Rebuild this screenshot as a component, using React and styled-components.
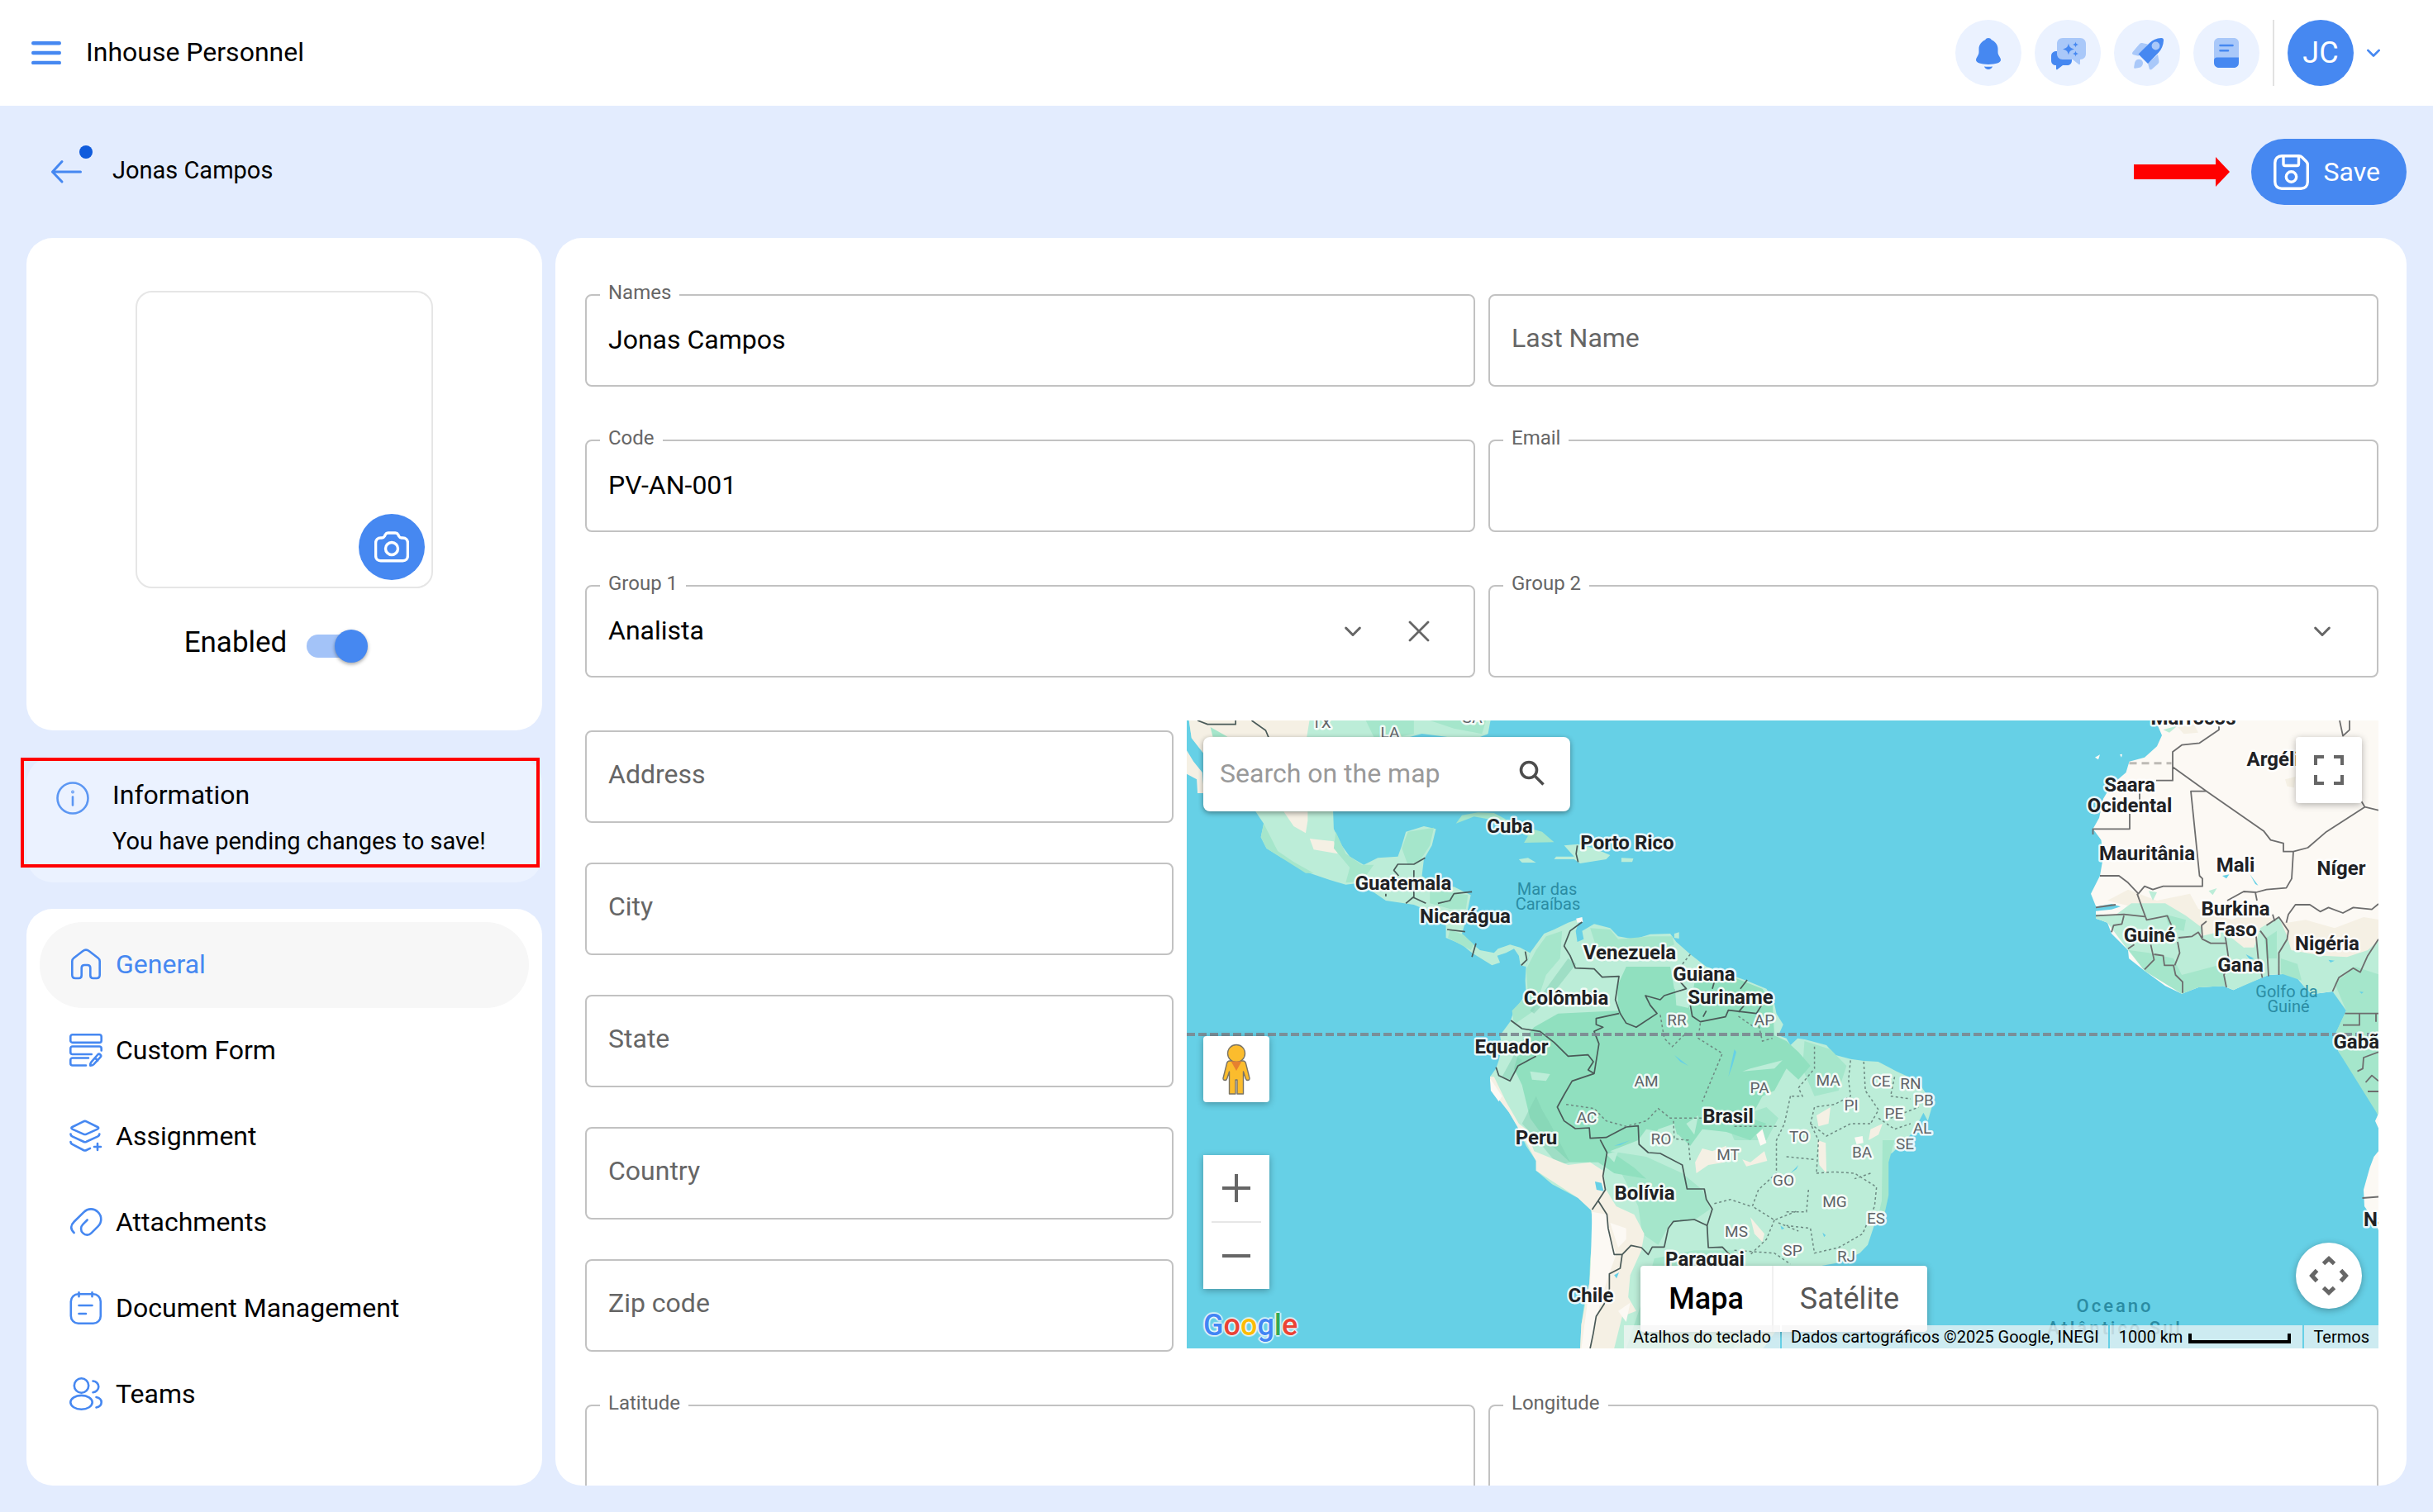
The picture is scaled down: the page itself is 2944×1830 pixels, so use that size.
import React from "react";
import styled, { createGlobalStyle, css } from "styled-components";

const color = {
  primary: "#4688f1",
  primaryDark: "#0f5bdc",
  tint: "#a9c8f9",
  pale: "#ebf2ff",
  page: "#e3ecfe",
  text: "#000",
  muted: "#666",
  outline: "#c2c2c2",
  alert: "#ff0000",
};

const GlobalStyle = createGlobalStyle`
  *, *::before, *::after { box-sizing: border-box; }
  body {
    margin: 0;
    background: ${color.page};
    color: ${color.text};
    font-family: Roboto, "Liberation Sans", sans-serif;
    font-size: 32px;
  }
  button, input, select { font: inherit; color: inherit; }
  button { border: 0; padding: 0; background: none; cursor: pointer; }
  svg { display: block; flex: none; }
`;

const Page = styled.div`
  display: flex;
  flex-direction: column;
  height: 100vh;
  overflow: hidden;
`;

/* ---------- top bar ---------- */

const TopBar = styled.header`
  display: flex;
  align-items: center;
  justify-content: space-between;
  flex: none;
  padding: 24px 64px 24px 38px;
  background: #fff;
`;

const BarGroup = styled.div`
  display: flex;
  align-items: center;
  gap: ${(p) => p.$gap}px;
`;

const BarTitle = styled.h1`
  margin: 0;
  padding-bottom: 2px;
  font-size: 32px;
  line-height: 40px;
  font-weight: 400;
`;

const RoundButton = styled.button`
  display: grid;
  place-items: center;
  width: 80px;
  height: 80px;
  border-radius: 50%;
  font-size: 36px;
  color: #fff;
  background: ${(p) => (p.$solid ? color.primary : color.pale)};
`;

const Divider = styled.span`
  width: 2px;
  height: 80px;
  background: #e2e2e2;
`;

/* ---------- page heading ---------- */

const Heading = styled.div`
  display: flex;
  align-items: center;
  justify-content: space-between;
  flex: none;
  padding: 40px 32px 40px 56px;
`;

const BackButton = styled.button`
  position: relative;
  display: grid;
  place-items: center;
  width: 48px;
  height: 48px;

  &::after {
    content: "";
    position: absolute;
    left: 40px;
    top: -8px;
    width: 16px;
    height: 16px;
    border-radius: 50%;
    background: ${color.primaryDark};
  }
`;

const PersonName = styled.h2`
  margin: 0;
  padding-bottom: 4px;
  font-size: 29px;
  line-height: 36px;
  font-weight: 400;
`;

const SaveButton = styled.button`
  display: flex;
  align-items: center;
  gap: 18px;
  height: 80px;
  padding: 0 32px 0 27px;
  border-radius: 40px;
  background: ${color.primary};
  color: #fff;
  font-size: 32px;
`;

/* ---------- layout ---------- */

const Columns = styled.main`
  display: grid;
  grid-template-columns: 624px minmax(0, 1fr);
  grid-template-rows: minmax(0, 1fr);
  gap: 16px;
  flex: 1;
  min-height: 0;
  padding: 0 32px 32px;
`;

const Side = styled.aside`
  display: flex;
  flex-direction: column;
  gap: 32px;
`;

const Card = styled.section`
  border-radius: 32px;
  background: #fff;
`;

const ProfileCard = styled(Card)`
  display: flex;
  flex-direction: column;
  align-items: center;
  gap: 42px;
  padding: 64px 32px 82px;
`;

const Photo = styled.div`
  display: flex;
  align-items: flex-end;
  justify-content: flex-end;
  width: 360px;
  height: 360px;
  padding: 8px;
  border: 2px solid #e6e6e6;
  border-radius: 20px;
`;

const SwitchRow = styled.label`
  display: flex;
  align-items: center;
  gap: 24px;
  padding-right: 20px;
  font-size: 35px;
  line-height: 48px;
`;

const Switch = styled.input`
  appearance: none;
  position: relative;
  width: 74px;
  height: 40px;
  margin: 8px 0 0;

  &::before {
    content: "";
    position: absolute;
    inset: 6px 2px 6px 0;
    border-radius: 14px;
    background: #a3c3f8;
  }

  &::after {
    content: "";
    position: absolute;
    top: 0;
    right: 0;
    width: 40px;
    height: 40px;
    border-radius: 50%;
    background: ${color.primary};
    box-shadow: 0 2px 4px rgba(0, 0, 0, 0.35);
  }
`;

const InfoCard = styled(Card)`
  position: relative;
  display: flex;
  align-items: flex-start;
  gap: 28px;
  padding: 30px 36px 34px;
  background: ${color.pale};

  &::after {
    content: "";
    position: absolute;
    inset: 1px 3px 18px -7px;
    border: 4px solid ${color.alert};
  }
`;

const InfoText = styled.div`
  display: flex;
  flex-direction: column;
  gap: 24px;
`;

const InfoTitle = styled.strong`
  font-size: 32px;
  line-height: 32px;
  font-weight: 400;
`;

const InfoMessage = styled.span`
  font-size: 29px;
  line-height: 32px;
`;

const MenuCard = styled(Card)`
  flex: 1;
  padding: 16px;
`;

const MenuLink = styled.a`
  display: flex;
  align-items: center;
  gap: 16px;
  height: 104px;
  padding: 0 36px 2px;
  border-radius: 52px;
  text-decoration: none;
  color: ${(p) => (p.$active ? color.primary : color.text)};
  background: ${(p) => (p.$active ? "#f7f7f7" : "transparent")};
`;

const FormCard = styled(Card)`
  overflow: hidden;
  padding: 68px 34px 0 36px;
`;

const Form = styled.form`
  display: flex;
  flex-direction: column;
`;

const FieldGrid = styled.div`
  display: grid;
  grid-template-columns: 1fr 1fr;
  gap: 64px 16px;
`;

const AddressRow = styled.div`
  display: grid;
  grid-template-columns: minmax(0, 712fr) minmax(0, 1442fr);
  gap: 16px;
  padding: 52px 0 64px;
`;

const AddressFields = styled.div`
  display: flex;
  flex-direction: column;
  gap: 48px;
  padding-top: 12px;
`;

/* ---------- outlined field ---------- */

const FieldBox = styled.div`
  position: relative;
  display: flex;
  align-items: center;
  height: 112px;
  padding-right: ${(p) => (p.$adorned ? 26 : 0)}px;
  border: 2px solid ${color.outline};
  border-radius: 8px;
`;

const floating = css`
  left: 16px;
  top: -18px;
  padding: 0 10px;
  background: #fff;
  font-size: 24px;
  line-height: 28px;
`;

const resting = css`
  left: 26px;
  top: 0;
  font-size: 32px;
  line-height: 102px;
`;

const FieldLabel = styled.label`
  position: absolute;
  color: ${color.muted};
  pointer-events: none;
  ${(p) => (p.$floating ? floating : resting)}
`;

const control = css`
  flex: 1;
  min-width: 0;
  height: 100%;
  padding: 0 26px 2px;
  border: 0;
  border-radius: 8px;
  outline: 0;
  background: transparent;
  font-size: 32px;
`;

const TextInput = styled.input`
  ${control}
`;

const Select = styled.select`
  ${control}
  appearance: none;
`;

const Adornment = styled.span`
  display: grid;
  place-items: center;
  width: 80px;
  height: 80px;
`;

/* ---------- map ---------- */

const MapFrame = styled.div`
  position: relative;
  height: 760px;
  overflow: hidden;
  background: #66d0e6;
`;

const MapSvg = styled.svg`
  width: 100%;
  height: 100%;
`;

const MapSearch = styled.label`
  position: absolute;
  left: 20px;
  top: 20px;
  display: flex;
  align-items: center;
  width: 444px;
  height: 90px;
  padding: 0 30px 2px 20px;
  border-radius: 8px;
  background: #fff;
  box-shadow: 0 2px 6px rgba(0, 0, 0, 0.4);
`;

const SearchInput = styled.input`
  flex: 1;
  min-width: 0;
  padding: 0;
  border: 0;
  outline: 0;
  background: transparent;
  font-size: 32px;

  &::placeholder { color: #999; opacity: 1; }
`;

const MapControl = styled.button`
  position: absolute;
  display: grid;
  place-items: center;
  width: 80px;
  height: 80px;
  border-radius: ${(p) => (p.$round ? "50%" : "4px")};
  background: #fff;
  box-shadow: 0 2px 8px rgba(0, 0, 0, 0.3);
`;

const FullscreenControl = styled(MapControl)`
  right: 20px;
  top: 20px;
`;

const PegmanControl = styled(MapControl)`
  left: 20px;
  bottom: 298px;
`;

const CameraControl = styled(MapControl)`
  right: 20px;
  bottom: 48px;
`;

const ZoomControls = styled.div`
  position: absolute;
  left: 20px;
  bottom: 72px;
  display: flex;
  flex-direction: column;
  align-items: center;
  width: 80px;
  background: #fff;
  box-shadow: 0 2px 8px rgba(0, 0, 0, 0.3);
`;

const ZoomButton = styled.button`
  display: grid;
  place-items: center;
  width: 80px;
  height: 80px;
`;

const ZoomRule = styled.span`
  width: 60px;
  height: 2px;
  background: #e6e6e6;
`;

const MapTypes = styled.div`
  position: absolute;
  right: 546px;
  bottom: 20px;
  display: flex;
  border-radius: 4px;
  background: #fff;
  box-shadow: 0 2px 8px rgba(0, 0, 0, 0.3);
`;

const MapType = styled.button`
  height: 80px;
  padding: 0 34px;
  box-shadow: ${(p) => (p.$active ? "none" : "inset 2px 0 0 #f0f0f0")};
  font-size: 36px;
  font-weight: ${(p) => (p.$active ? 500 : 400)};
  color: ${(p) => (p.$active ? "#000" : "#565656")};
`;

const Brand = styled.a`
  position: absolute;
  left: 20px;
  bottom: 6px;
  font-size: 36px;
  line-height: 44px;
  font-weight: 500;
  text-decoration: none;
  text-shadow: 0 0 2px #fff, 0 0 2px #fff, 2px 0 1px rgba(255, 255, 255, 0.6),
    -2px 0 1px rgba(255, 255, 255, 0.6), 0 2px 1px rgba(255, 255, 255, 0.6),
    0 -2px 1px rgba(255, 255, 255, 0.6);
`;

const BrandLetter = styled.span`
  color: ${(p) => p.$ink};
`;

const Legal = styled.div`
  position: absolute;
  right: 0;
  bottom: 0;
  display: flex;
  gap: 2px;
  font-size: 20px;
  line-height: 28px;
`;

const legalPart = css`
  display: flex;
  align-items: center;
  height: 28px;
  padding: 0 11px;
  background: rgba(245, 245, 245, 0.72);
  color: #000;
  font-size: 20px;
  text-decoration: none;
`;

const LegalButton = styled.button`
  ${legalPart}
`;

const LegalText = styled.span`
  ${legalPart}
`;

const LegalLink = styled.a`
  ${legalPart}
`;

const ScaleBar = styled.span`
  width: 124px;
  height: 12px;
  margin: 4px 3px 0 7px;
  border: 4px solid #000;
  border-top: 0;
`;

/* ---------- icons ---------- */

const line = {
  fill: "none",
  stroke: "currentColor",
  strokeLinecap: "round",
  strokeLinejoin: "round",
};

const MenuIcon = () => (
  <svg width="36" height="28" viewBox="0 0 36 28" {...line} stroke={color.primary} strokeWidth="4.4">
    <path d="M2.2 2.2h31.6M2.2 14h31.6M2.2 26h31.6" />
  </svg>
);

const BellIcon = () => (
  <svg width="80" height="80" viewBox="0 0 80 80" fill={color.primary}>
    <path d="M40 22c1.600 0 3 .8 3.800 2.200C48 26 51.500 30 51.500 35v4c0 2 .8 3.600 1.800 5.200 1 1.600 1.700 3 1.700 4.400 0 3.400-6 5.400-15 5.400s-15-2-15-5.400c0-1.400.7-2.800 1.700-4.400s1.800-3.200 1.800-5.200v-4c0-5 3.500-9 7.700-10.800C37 22.800 38.400 22 40 22z" />
    <path d="M35 56.500c1.600.3 8.400.3 10 0-.8 2.200-2.600 3.500-5 3.500s-4.200-1.300-5-3.500z" />
  </svg>
);

const ChatIcon = () => (
  <svg width="80" height="80" viewBox="0 0 80 80">
    <path fill={color.primary} d="M26 38h13c4 0 6 2.500 6 6v5c0 4-2.500 6-6 6h-5l-6.500 5c-1 .7-1.500.3-1.500-.7V55c-3.500 0-6-2-6-6v-5c0-3.500 2.500-6 6-6z" />
    <path fill={color.tint} d="M34 22h21c4.500 0 7 3 7 7v12c0 4-2.500 7-7 7v5c0 1.200-1 1.500-1.800.8L46 48H34c-4.500 0-7-3-7-7V29c0-4 2.500-7 7-7z" />
    <path fill={color.primary} d="M41 28.500c1 4.500 2.500 6 7 7-4.500 1-6 2.500-7 7-1-4.500-2.500-6-7-7 4.500-1 6-2.500 7-7zM49.500 26.500c.5 2.300 1.200 3 3.500 3.500-2.300.5-3 1.200-3.500 3.500-.5-2.300-1.200-3-3.500-3.500 2.300-.5 3-1.200 3.500-3.500zM49.500 37.500c.5 2.300 1.200 3 3.500 3.500-2.300.5-3 1.200-3.500 3.500-.5-2.300-1.200-3-3.500-3.500 2.300-.5 3-1.200 3.500-3.500z" />
  </svg>
);

const RocketIcon = () => (
  <svg width="80" height="80" viewBox="0 0 80 80">
    <path fill={color.tint} d="M41 29.500l-6-1.300c-2-.4-3.500.1-4.600 1.600l-7.600 9c-1.500 2-.7 3 .8 3.500l6 1.400z" />
    <path fill={color.tint} d="M53 42l1.300 7c.4 2-.1 3.500-1.600 4.800l-6.500 5.600c-2 1.600-3.200.8-3.600-.7L41 52.500z" />
    <path fill={color.tint} d="M24.200 57l.8-5c.7-3 3-4.500 5.500-4.300 3 .3 4.800 2.500 4.500 5-.3 3-2 4.800-5 5.300l-4.500.8c-1 .1-1.500-.6-1.300-1.800z" />
    <path fill={color.primary} d="M57 22c2-.2 3.200 1 3 3-.3 6-2.500 10.500-6 14.500L41 53 29.500 41.500 43 28c4-3.600 8.400-5.700 14-6z" />
    <circle cx="50.500" cy="31.500" r="4.900" fill={color.tint} />
  </svg>
);

const NotesIcon = () => (
  <svg width="80" height="80" viewBox="0 0 80 80">
    <path fill={color.tint} d="M31 22h18c3.500 0 6 2.500 6 6v24H25V28c0-3.500 2.500-6 6-6z" />
    <path fill={color.primary} d="M28.500 45.500H55V52c0 3.500-2.500 6-6 6H31c-3.500 0-6-2.500-6-6v-3c0-2 1.500-3.500 3.500-3.500z" />
    <path stroke={color.primary} strokeWidth="2.600" strokeLinecap="round" d="M32.500 31h15M32.500 37.200h9.500" />
  </svg>
);

const ChevronIcon = ({ size = 18, ink = "#666", weight = 2.6 }) => (
  <svg width={size} height={size} viewBox="0 0 18 18" {...line} stroke={ink} strokeWidth={weight}>
    <path d="M1.500 5.500L9 13l7.500-7.500" />
  </svg>
);

const CloseIcon = () => (
  <svg width="26" height="26" viewBox="0 0 26 26" {...line} stroke="#666" strokeWidth="2.800">
    <path d="M2 2l22 22M24 2L2 24" />
  </svg>
);

const ArrowLeftIcon = () => (
  <svg width="48" height="48" viewBox="0 0 48 48" {...line} stroke={color.primary} strokeWidth="3">
    <path d="M41.500 24H7.500M19 11.500L7.500 24 19 36" />
  </svg>
);

const RedArrow = () => (
  <svg width="116" height="36" viewBox="0 0 116 36" fill={color.alert}>
    <path d="M0 9h99V0l17 18-17 18v-9H0z" />
  </svg>
);

const SaveIcon = () => (
  <svg width="43" height="43" viewBox="0 0 43 43" {...line} strokeWidth="3.400">
    <path d="M10 1.800h20.500c1.800 0 3 .5 4.200 1.700l5 5c1.100 1.100 1.600 2.400 1.600 4V33c0 5-3.300 8.200-8.200 8.200H10c-5 0-8.200-3.200-8.200-8.200V10c0-5 3.300-8.200 8.200-8.200z" />
    <path d="M12 2v9.500c0 1.200.8 2 2 2h14.500c1.200 0 2-.8 2-2V2" />
    <circle cx="21.500" cy="27" r="6.200" />
  </svg>
);

const CameraIcon = () => (
  <svg width="42" height="38" viewBox="0 0 42 38" {...line} strokeWidth="3.400">
    <path d="M16.500 2h9c1.500 0 2.500.7 3.200 2l1 2c.7 1.300 1.700 2 3.200 2h1.500c3.600 0 6 2.400 6 6v15.500c0 4-2.400 6.300-6 6.300H7.600c-3.600 0-6-2.300-6-6.300V14c0-3.600 2.400-6 6-6h1.500c1.500 0 2.500-.7 3.200-2l1-2c.7-1.300 1.700-2 3.200-2z" />
    <circle cx="21" cy="21" r="7.500" />
  </svg>
);

const InfoIcon = () => (
  <svg width="40" height="40" viewBox="0 0 40 40" {...line} stroke="#5c97f3" strokeWidth="2.600">
    <circle cx="20" cy="20" r="18.500" />
    <path d="M20 18.500v10" />
    <circle cx="20" cy="12.500" r=".6" />
  </svg>
);

const SideIcon = ({ children }) => (
  <svg width="40" height="40" viewBox="0 0 40 40" {...line} stroke={color.primary} strokeWidth="2.600">
    {children}
  </svg>
);

const HomeIcon = () => (
  <SideIcon>
    <path d="M3.300 16.500c0-1.700.7-3 2-4L16 4.200c2.600-2 5.400-2 8 0l10.700 8.300c1.300 1 2 2.300 2 4V33c0 2.500-1.400 4-3.900 4h-4c-2.200 0-3.500-1.300-3.500-3.500v-9c0-2.200-1.300-3.500-3.500-3.500h-3.600c-2.200 0-3.500 1.300-3.500 3.500v9c0 2.200-1.300 3.500-3.500 3.500h-4c-2.500 0-3.900-1.500-3.900-4z" />
  </SideIcon>
);

const FormIcon = () => (
  <SideIcon>
    <rect x="1.300" y="1.300" width="37.400" height="9.600" rx="2.500" />
    <path d="M38.700 20.500V18c0-1.600-1-2.500-2.500-2.500H3.800c-1.500 0-2.500.9-2.500 2.500v4.500c0 1.600 1 2.500 2.500 2.500h23M23 29.500H3.800c-1.500 0-2.500.9-2.500 2.500v4c0 1.600 1 2.500 2.500 2.500H20" />
    <path d="M34.200 25.500c1-1 2.300-.9 3.200 0 1 1 1 2.200 0 3.200l-8.200 8.600c-1 1-2 1.300-3.900 1.300-.1-2 .2-3.200 1.200-4.300zM31 29.500l3.200 3" />
  </SideIcon>
);

const LayersIcon = () => (
  <SideIcon>
    <path d="M17 2.300c1.300-.6 2.400-.6 3.600 0L34 9c1.600.8 1.600 1.800 0 2.600L20.600 17.600c-1.200.6-2.300.6-3.600 0L3.500 11.600C2 10.800 2 9.800 3.500 9z" />
    <path d="M1.500 17.500c0 1.500.8 2.400 2.300 3.100L17 26.800c1.300.6 2.400.6 3.600 0L34 20.600c1.500-.7 2.300-1.600 2.300-3.100" />
    <path d="M1.500 27c0 1.500.8 2.400 2.300 3.100L17 37c1.300.6 2.400.6 3.600 0l4.400-2.200M34 29v8M30 33h8" />
  </SideIcon>
);

const ClipIcon = () => (
  <SideIcon>
    <path d="M21.600 17.500l-5.300 5.400c-3 3-3 7.600 0 10.500 3 3 7.300 3 10.200 0l8-8c5-5 5-12.500.2-17.300-5-5-12.300-5-17.300 0L5.800 19.500c-4.500 4.500-5 9-.2 13.500" />
  </SideIcon>
);

const DocIcon = () => (
  <SideIcon>
    <rect x="1.800" y="3.200" width="36" height="35.500" rx="9" />
    <path d="M11.500 1.300v5M27.500 1.300v5M11.500 17h16M11.500 27h8.500" />
  </SideIcon>
);

const TeamIcon = () => (
  <SideIcon>
    <circle cx="14.500" cy="10" r="8.700" />
    <ellipse cx="14.500" cy="30.300" rx="13.200" ry="8.400" />
    <path d="M28.500 4.500c4 .3 6.800 3.400 6.800 6.800s-2.800 6.500-6.800 7M32.500 24c3.800.8 6.200 3.200 6.200 6.200s-2.400 5.500-6.200 6.300" />
  </SideIcon>
);

const SearchIcon = () => (
  <svg width="32" height="32" viewBox="0 0 32 32" fill="none" stroke="#4d4d4d" strokeWidth="3.600">
    <circle cx="12" cy="12" r="9.500" />
    <path d="M19 19l10.500 10.500" />
  </svg>
);

const FullscreenIcon = () => (
  <svg width="36" height="36" viewBox="0 0 36 36" fill="none" stroke="#666" strokeWidth="4">
    <path d="M2 12V2h10M24 2h10v10M34 24v10H24M12 34H2V24" />
  </svg>
);

const CameraArrowsIcon = () => (
  <svg width="48" height="48" viewBox="0 0 48 48" fill="none" stroke="#666" strokeWidth="5">
    <path d="M17.500 9.500L24 3.500l6.500 6M17.500 38.500l6.500 6 6.500-6M9.500 17.500L3.500 24l6 6.500M38.500 17.500l6 6.500-6 6.500" />
  </svg>
);

const PlusIcon = () => (
  <svg width="34" height="34" viewBox="0 0 34 34" fill="none" stroke="#666" strokeWidth="4">
    <path d="M0 17h34M17 0v34" />
  </svg>
);

const MinusIcon = () => (
  <svg width="34" height="34" viewBox="0 0 34 34" fill="none" stroke="#666" strokeWidth="4">
    <path d="M0 17h34" />
  </svg>
);

const PegmanIcon = () => (
  <svg width="36" height="62" viewBox="0 0 36 62" fill="#fbbc2d" stroke="#7a7466" strokeWidth="1.400" strokeLinejoin="round">
    <path d="M10 21h16c2 0 3 .9 3.500 3l4.500 18c.3 1.500-.8 2.500-2.200 2.500-1.300 0-2.200-.7-2.600-2.200L26.500 34v27H19V44h-2v17H9.500V34l-2.700 8.300c-.4 1.500-1.300 2.200-2.600 2.200C2.800 44.500 1.700 43.500 2 42l4.500-18c.5-2.100 1.500-3 3.500-3z" />
    <circle cx="18" cy="12" r="10.500" />
    <path fill="#e6812f" stroke="none" d="M11.500 21.500h13L18 33z" />
  </svg>
);

/* ---------- map drawing ---------- */

const COUNTRIES = [
  [391, 136, "Cuba"], [533, 156, "Porto Rico"], [262, 205, "Guatemala"], [337, 245, "Nicarágua"],
  [536, 289, "Venezuela"], [626, 315, "Guiana"], [658, 343, "Suriname"], [459, 344, "Colômbia"],
  [393, 403, "Equador"], [423, 513, "Peru"], [655, 487, "Brasil"], [554, 580, "Bolívia"],
  [627, 660, "Paraguai"], [489, 704, "Chile"], [1218, 5, "Marrocos"], [1321, 55, "Argélia"],
  [1141, 86, "Saara"], [1141, 111, "Ocidental"], [1162, 169, "Mauritânia"], [1269, 183, "Mali"],
  [1397, 187, "Níger"], [1269, 236, "Burkina"], [1269, 261, "Faso"], [1165, 268, "Guiné"],
  [1380, 278, "Nigéria"], [1275, 304, "Gana"], [1422, 397, "Gabão"], [1469, 612, "Namíbia"],
];

const STATES = [
  [163, 9, "TX"], [246, 21, "LA"], [345, 3, "GA"], [593, 369, "RR"], [699, 369, "AP"],
  [556, 443, "AM"], [693, 451, "PA"], [484, 487, "AC"], [574, 513, "RO"], [655, 532, "MT"],
  [722, 563, "GO"], [665, 625, "MS"], [733, 648, "SP"], [798, 655, "RJ"], [834, 609, "ES"],
  [784, 589, "MG"], [817, 529, "BA"], [741, 510, "TO"], [869, 519, "SE"], [890, 500, "AL"],
  [856, 482, "PE"], [892, 466, "PB"], [876, 446, "RN"], [804, 472, "PI"], [840, 443, "CE"],
  [776, 442, "MA"],
];

const SEAS = [
  [436, 211, "Mar das"], [437, 229, "Caraíbas"], [1331, 335, "Golfo da"], [1333, 353, "Guiné"],
];

const Place = styled.text`
  font-size: 24px;
  font-weight: 700;
  fill: #202124;
  text-anchor: middle;
  stroke: #fff;
  stroke-opacity: 0.85;
  stroke-width: 5px;
  stroke-linejoin: round;
  paint-order: stroke;
`;

const StateName = styled(Place)`
  font-size: 19px;
  font-weight: 400;
  fill: #5f6368;
`;

const SeaName = styled.text`
  font-size: 20px;
  fill: #2b8ca3;
  text-anchor: middle;
`;

const OceanName = styled(SeaName)`
  font-size: 22px;
  font-weight: 500;
  letter-spacing: 3px;
`;

const SOUTH_AMERICA =
  "M880 930L878 980 880 1030 850 1090 840 1130 815 1180 820 1220 812 1270 805 1300 790 1330 795 1380 820 1410 838 1460 858 1510 880 1580 905 1635 905 1670 945 1720 1010 1770 1043 1815 1048 1900 1040 1990 1038 2080 1025 2160 1018 2230 1015 2320H1470L1500 2260 1540 2180 1560 2110 1600 2040 1620 2015 1661 2005 1713 1970 1733 1940 1749 1870 1775 1800 1780 1720 1780 1620 1795 1605 1847 1530 1872 1460 1883 1490 1893 1440 1883 1400 1857 1345 1805 1310 1759 1275 1723 1272 1690 1265 1651 1250 1630 1215 1578 1195 1558 1190 1540 1215 1530 1190 1510 1180 1522 1140 1505 1100 1498 1050 1480 1010 1430 980 1390 960 1330 930 1290 885 1255 840 1240 810 1190 812 1150 830 1110 820 1090 790 1050 775 1020 800 1024 830 1008 840 1004 800 1015 755 985 770 950 795 925 810 905 850 890 880Z";

const CENTRAL_AMERICA =
  "M200 350L205 367 225 410 218 460 232 500 270 535 310 560 340 590 390 615 430 632 455 628 490 650 530 690 600 705 640 730 680 780 680 825 720 850 745 880 795 925 815 915 808 890 830 880 850 865 862 890 866 925 880 930 890 880 865 860 840 850 810 865 800 880 765 870 740 840 720 810 728 770 735 720 742 670 700 640 660 640 620 600 625 540 645 490 655 430 625 420 580 440 570 490 560 530 510 535 475 560 440 530 420 490 400 430 398 350Z";

const AFRICA =
  "M895 30L912 90 900 130 870 170 833 185 825 225 790 270 770 320 760 390 745 430 765 470 770 530 762 600 740 665 752 710 752 755 780 770 790 810 830 870 832 900 870 945 920 1000 960 1028 1000 1005 1060 1000 1085 1015 1120 990 1170 960 1230 955 1255 1000 1275 1030 1325 1020 1355 1050 1358 1090 1348 1140 1330 1180 1340 1240 1385 1320 1410 1380 1425 1430 1440 1490V30Z";

const WorldMap = () => (
  <MapSvg viewBox="0 0 1442 760" preserveAspectRatio="xMidYMid slice" role="img" aria-label="Mapa">
    <rect width="1442" height="760" fill="#66d0e6" />

    <g transform="translate(-16 -12) scale(.48473 .33333)">
      <g fill="#bcedd8">
        <path d="M38 30L45 100 72 150 120 260 200 350H400L420 200 500 100 590 96 620 84 680 95 740 110 785 85 792 30Z" />
        <path d={CENTRAL_AMERICA} />
        <path fill="#a5e6cb" d="M705 410L720 380 760 370 800 372 830 395 870 420 920 440 950 478 875 480 885 455 840 430 790 395 750 385Z" />
        <path d="M975 490L1010 485 1050 500 1090 525 1080 540 1015 555 1000 540 950 540 955 530 1000 530ZM862 540L885 535 905 552 870 552ZM1118 535L1148 537 1145 550 1118 550ZM1250 810L1262 805 1262 828 1250 825Z" />
        <path d={SOUTH_AMERICA} />
      </g>

      <path fill="#f5f0e4" d="M38 30L45 100 72 150 110 200 330 120 340 30ZM33 145L50 185 72 225 76 300 60 300 58 250 33 230ZM275 367L335 367 335 400 330 445 300 420ZM340 465L400 475 410 520 350 505Z" />
      <path fill="#a5e6cb" d="M92 60L135 95H98ZM480 36L600 36 600 85 560 96 500 96ZM640 36L780 36 770 85 700 65ZM585 440L650 425 640 490 615 545 585 560 570 500ZM640 650L735 670 730 720 690 720 640 700ZM405 440L430 520 470 560 500 560 470 620 430 625 440 570 400 500ZM225 410L260 510 300 550 350 590 330 590 232 500 218 460ZM690 795L725 815 750 850 742 870 685 825Z" />

      <path fill="#a5e6cb" d="M1040 790L1090 795 1110 830 1190 820 1245 820 1250 850 1190 880 1060 880ZM930 820L970 800 965 900 930 960 900 1090 850 1140 845 1090 885 1030 880 940 905 870ZM1090 1600L1180 1620 1270 1680 1320 1740 1340 1810 1300 1850 1240 1860 1210 1940 1170 1900 1160 1800ZM1575 1200L1640 1230 1680 1290 1660 1380 1600 1400 1570 1300ZM1300 1960L1400 1960 1400 2316 1130 2316 1180 2100 1200 1990ZM1380 1490L1480 1440 1510 1480 1480 1560 1400 1560ZM1770 1560L1800 1560 1785 1640 1785 1760 1770 1860 1755 1860 1768 1780Z" />
      <path fill="#90e0bf" d="M1130 930L1240 930 1250 1010 1275 1030 1290 1090 1300 990 1400 970 1470 1010 1495 1060 1500 1180 1530 1200 1560 1240 1590 1290 1560 1340 1530 1300 1500 1380 1470 1400 1440 1480 1480 1500 1440 1560 1380 1530 1320 1520 1290 1580 1260 1540 1180 1520 1160 1560 1090 1600 1150 1660 1180 1700 1100 1680 1060 1640 990 1640 930 1560 890 1480 870 1360 850 1300 870 1200 900 1150 960 1100 1110 1090 1108 1000Z" />
      <path fill="#bcedd8" d="M1250 970L1290 980 1285 1080 1255 1070ZM890 1310L940 1320 930 1345 895 1340ZM1210 1520L1250 1500 1260 1560 1230 1640 1180 1590ZM1080 1610L1110 1600 1100 1640ZM1440 1300L1520 1270 1500 1300 1420 1310ZM1280 1500L1310 1470 1300 1540Z" />
      <path fill="#7fcfb2" opacity=".5" d="M985 900L1005 920 940 1040 900 1100 890 1090ZM905 1400L920 1450 940 1500 990 1640 960 1650 920 1580 870 1500ZM850 1250L870 1270 840 1340 820 1330Z" />

      <path fill="#f5f0e4" d="M790 1330L800 1330 830 1420 862 1500 880 1520 900 1600 985 1650 1040 1640 1072 1670 1080 1740 1105 1800 1150 1830 1175 1900 1168 1960 1140 2050 1135 2130 1155 2180 1120 2200 1100 2316H1015L1018 2230 1038 2080 1048 1900 1043 1815 1010 1770 905 1670 905 1635 858 1510 838 1460 795 1380ZM1605 1470L1640 1440 1635 1500 1610 1510ZM1608 1560L1628 1570 1630 1680 1612 1650ZM1740 1520L1770 1500 1760 1540 1735 1560ZM1440 1840L1475 1900 1470 1930 1450 1900ZM1302 1640L1320 1590 1345 1600 1380 1580 1375 1640 1335 1650 1305 1680ZM1420 1630L1440 1640 1475 1600 1482 1635 1430 1655Z" />
      <path fill="#fcf9f4" d="M790 1335L820 1400 812 1420 792 1380ZM1045 1820L1082 1830 1090 1900 1105 1975 1086 2050 1060 2180 1040 2316H1018L1040 2080ZM1090 1860L1130 1880 1130 1920 1110 1950ZM1455 1540L1470 1520 1480 1570 1465 1580ZM1700 1550L1720 1545 1722 1570 1705 1575ZM1005 755L1020 750 1022 768 1008 770ZM1110 2180L1140 2150 1130 2220Z" />
      <path fill="#66d0e6" d="M1052 1710L1068 1715 1074 1745 1056 1740ZM1100 2050L1112 2040 1106 2062ZM1515 1870L1525 1880 1518 1885ZM1540 1680L1560 1650 1555 1665ZM1620 1895L1628 1905 1624 1912ZM1250 1250L1285 1290 1265 1275ZM1395 1290L1405 1240 1400 1230 1385 1330ZM1100 1580L1140 1560 1115 1578Z" />

      <g fill="none" stroke="#4a5a58" strokeWidth="1.700" strokeLinejoin="round">
        <path vectorEffect="non-scaling-stroke" d="M60 36L85 50H155V36M195 36L230 72 238 100M628 535L600 558 560 558 550 580 562 600M600 580V680M530 665V675M580 700L598 678 630 700M660 700L690 690 700 665 745 658M683 795L728 803M755 845L745 895M878 875L882 905 868 925M1008 490L1005 520 1010 550" />
        <path vectorEffect="non-scaling-stroke" d="M1020 768L990 800 975 855 990 890 1003 935 1050 938 1070 968 1112 965 1103 1050 1115 1100 1130 1135 1155 1150 1207 1100 1190 1070 1178 1035 1215 1050 1225 1035 1280 1010 1265 985M1290 1070L1295 1110 1315 1130 1378 1112 1385 1088 1455 1100 1470 1065M1350 985L1345 1010M1432 978L1415 1010M1330 1090L1322 1112M1425 1070L1410 1095" />
        <path vectorEffect="non-scaling-stroke" d="M842 1125L870 1155 915 1165 950 1205 985 1255 1035 1250 1048 1275 1035 1305 1050 1318 1062 1210 1050 1165 1072 1150 1055 1140 1055 1118 1112 1100M905 1255L860 1290 840 1345 812 1325 805 1295M1050 1318L995 1345 975 1395 958 1440 975 1490 1003 1518 1038 1515 1040 1553 1080 1550 1130 1512 1160 1508 1162 1575 1185 1605 1215 1608 1270 1650 1282 1737 1325 1737 1330 1775 1345 1810 1332 1870 1335 1950 1370 1948 1388 1975" />
        <path vectorEffect="non-scaling-stroke" d="M1065 1558L1082 1605 1072 1690 1078 1740 1060 1780 1045 1812M1060 1780L1082 1830 1085 1880 1100 1975 1120 1975 1142 1942 1168 1950 1185 1975 1195 1948 1225 1948 1235 1880 1248 1855 1300 1848 1332 1870M1120 1975L1115 2025 1088 2045 1088 2100 1075 2155 1055 2200 1048 2260 1040 2316" />
      </g>
      <g fill="none" stroke="#6d8a82" strokeWidth="1.500" strokeDasharray="3 3">
        <path vectorEffect="non-scaling-stroke" d="M1290 885L1265 930M1215 1105L1225 1190 1245 1220 1280 1170M1315 1135L1310 1190 1370 1245 1320 1420M1455 1110L1470 1200 1495 1190M1410 1110L1450 1150M980 1430L1050 1445 1080 1490 1130 1510 1180 1490 1210 1445 1240 1480H1320M1248 1490L1250 1555 1285 1560 1290 1640M1400 1510H1510M1540 1400L1525 1500 1505 1560V1680L1460 1740 1445 1800 1500 1850 1560 1815M1350 1790L1390 1775 1440 1800M1500 1850L1480 1920 1440 1975M1510 1860L1560 1890M1600 1220L1600 1300 1560 1370 1570 1400 1540 1400" />
        <path vectorEffect="non-scaling-stroke" d="M1690 1270L1685 1340 1690 1400 1650 1430 1600 1440 1590 1500 1610 1560 1605 1680M1723 1275L1727 1380 1760 1450 1740 1500M1800 1330L1790 1400 1840 1410M1790 1480L1860 1440M1760 1480L1800 1520 1840 1500M1605 1680L1650 1675 1700 1680 1755 1730 1750 1800 1720 1900 1660 1950 1600 1970 1590 1880 1530 1870M1530 1620L1600 1630M1585 1740L1580 1820 1530 1820M1740 1680L1700 1700M1400 1960L1500 1970 1540 2010M1590 1500L1630 1545 1690 1500 1740 1500" />
      </g>
    </g>

    <g transform="translate(724 -12) scale(.5 .33333)">
      <path fill="#fcf9f4" d={AFRICA} />
      <path fill="#f5f0e4" d="M780 690L830 650 900 690 980 665 1000 720 1080 760 1150 720 1180 760 1215 770 1260 760 1330 790 1400 750 1440 760V900H1200L980 800 860 720ZM950 60L990 50 1000 80 965 85ZM1210 250L1235 240 1232 280 1215 275Z" />
      <path fill="#bcedd8" d="M752 740L800 742 838 700 920 700 970 745 1010 790 1005 820 1060 800 1110 860 1135 860 1150 790 1195 750 1215 820 1225 870 1300 890 1360 895 1410 870 1440 830V1490L1425 1430 1385 1320 1340 1240 1330 1180 1358 1090 1325 1020 1275 1030 1255 1000 1230 955 1170 960 1085 1015 1060 1000 1000 1005 960 1028 870 945 830 870 780 770 752 755ZM880 655L900 660 890 690ZM1025 655L1045 645 1035 670ZM915 70L950 55 930 80Z" />
      <path fill="#a5e6cb" d="M832 870L880 880 940 900 960 960 1060 920 1065 1000 1000 1005 960 1028 870 945ZM1330 990L1380 930 1440 960V1480L1340 1240 1330 1180 1358 1090ZM1200 900L1240 920 1250 980 1200 955ZM1160 830L1190 800 1190 900 1165 900ZM920 740L970 760 965 800 930 790Z" />
      <path fill="#66d0e6" d="M752 712L790 702 812 712 790 722 752 728ZM1058 600L1075 595 1068 610ZM1125 595L1145 635 1138 630ZM1115 885L1135 900 1125 905ZM1315 905L1330 908 1320 915ZM1390 1020L1400 1022 1395 1028Z" />
      <path fill="#fcf9f4" d="M1436 1600L1425 1620 1415 1660 1400 1740 1402 1800 1425 1850 1440 1900V1600ZM1440 1450L1428 1490 1440 1530ZM750 170L762 160 758 178ZM810 160L816 158 814 170Z" />
      <g fill="none" stroke="#6d6d6d" strokeWidth="1.800" strokeLinejoin="round">
        <path vectorEffect="non-scaling-stroke" d="M1050 55V70L1003 118 960 125 938 150V205L1020 293 1158 437 1175 470 1206 482V512H1230L1265 498 1310 440 1403 350 1436 362M938 205V254H898M834 375V430H745V450M858 290V340M1020 293H982L1003 600 1010 610V638H915L890 650 870 638 855 665 830 625 808 600H762M1342 36L1350 92 1366 70V36M1395 330L1403 350M1230 512L1226 610 1213 644 1165 650 1140 660 1110 657 1070 690M1138 660L1142 690M852 665L865 720 875 760 925 745 935 780M752 745L820 740 870 748M752 715L800 705M820 745L815 775 795 780 790 805" />
        <path vectorEffect="non-scaling-stroke" d="M830 865L845 850M870 940L893 905 885 850M893 885L915 890 918 925 940 925 945 960 962 985V1025M950 840L955 880 943 925M952 825L985 820 1000 805 1010 830 1030 845 1068 845 1075 920 1062 960 1068 1005M1010 825L1008 780 1020 765M1068 845L1065 820M1140 820L1145 900 1155 970M1150 800L1165 830 1170 965M1165 780L1195 750 1218 800 1215 830 1195 880V960M1180 740L1185 765M1213 770L1218 740 1235 705 1270 705 1295 730 1315 715 1350 735 1375 715 1420 722 1436 702M1436 830L1410 890 1392 950 1375 935 1340 970 1325 1020M1355 1100H1436M1390 1100V1142H1350M1430 1100V1130M1436 1240L1400 1260 1398 1300 1385 1310M1405 1350L1420 1325 1436 1345M1410 1383H1436M1397 1770L1440 1765" />
      </g>
      <path vectorEffect="non-scaling-stroke" fill="none" stroke="#bdbab5" strokeWidth="3" strokeDasharray="9 6" d="M833 191H935" />
    </g>

    <path d="M0 380H1442" stroke="#7b8790" strokeWidth="4" strokeOpacity=".9" strokeDasharray="10 4" />

    {SEAS.map(([x, y, name]) => <SeaName key={`${name}${y}`} x={x} y={y}>{name}</SeaName>)}
    <OceanName x="1123" y="716">Oceano</OceanName>
    <OceanName x="1123" y="743">Atlântico Sul</OceanName>
    {STATES.map(([x, y, name]) => <StateName key={name} x={x} y={y}>{name}</StateName>)}
    {COUNTRIES.map(([x, y, name]) => <Place key={`${name}${y}`} x={x} y={y}>{name}</Place>)}
  </MapSvg>
);

const BRAND = [
  ["G", "#4285f4"], ["o", "#ea4335"], ["o", "#fbbc05"], ["g", "#4285f4"], ["l", "#34a853"], ["e", "#ea4335"],
];

const LocationMap = () => (
  <MapFrame>
    <WorldMap />
    <MapSearch>
      <SearchInput type="text" placeholder="Search on the map" aria-label="Search on the map" />
      <SearchIcon />
    </MapSearch>
    <FullscreenControl type="button" aria-label="Fullscreen"><FullscreenIcon /></FullscreenControl>
    <PegmanControl type="button" aria-label="Street View"><PegmanIcon /></PegmanControl>
    <ZoomControls>
      <ZoomButton type="button" aria-label="Zoom in"><PlusIcon /></ZoomButton>
      <ZoomRule />
      <ZoomButton type="button" aria-label="Zoom out"><MinusIcon /></ZoomButton>
    </ZoomControls>
    <CameraControl type="button" $round aria-label="Camera controls"><CameraArrowsIcon /></CameraControl>
    <MapTypes>
      <MapType type="button" $active>Mapa</MapType>
      <MapType type="button">Satélite</MapType>
    </MapTypes>
    <Brand href="#map">
      {BRAND.map(([letter, ink], i) => <BrandLetter key={i} $ink={ink}>{letter}</BrandLetter>)}
    </Brand>
    <Legal>
      <LegalButton type="button">Atalhos do teclado</LegalButton>
      <LegalText>Dados cartográficos ©2025 Google, INEGI</LegalText>
      <LegalText>1000 km<ScaleBar /></LegalText>
      <LegalLink href="#terms">Termos</LegalLink>
    </Legal>
  </MapFrame>
);

/* ---------- form ---------- */

const Field = ({ id, label, value = "", floatingLabel = false }) => (
  <FieldBox>
    <TextInput id={id} type="text" defaultValue={value} />
    <FieldLabel htmlFor={id} $floating={floatingLabel}>{label}</FieldLabel>
  </FieldBox>
);

const SelectField = ({ id, label, options, clearable = false }) => (
  <FieldBox $adorned>
    <Select id={id} defaultValue={options[0]}>
      {options.map((option) => <option key={option} value={option}>{option}</option>)}
    </Select>
    <FieldLabel htmlFor={id} $floating>{label}</FieldLabel>
    <Adornment><ChevronIcon size={20} /></Adornment>
    {clearable && <Adornment as="button" type="button" aria-label="Clear"><CloseIcon /></Adornment>}
  </FieldBox>
);

const ADDRESS = [
  ["address", "Address"], ["city", "City"], ["state", "State"], ["country", "Country"], ["zip", "Zip code"],
];

const MENU = [
  ["General", HomeIcon], ["Custom Form", FormIcon], ["Assignment", LayersIcon],
  ["Attachments", ClipIcon], ["Document Management", DocIcon], ["Teams", TeamIcon],
];

export default function App() {
  return (
    <Page>
      <GlobalStyle />
      <TopBar>
        <BarGroup $gap={30}>
          <button type="button" aria-label="Menu"><MenuIcon /></button>
          <BarTitle>Inhouse Personnel</BarTitle>
        </BarGroup>
        <BarGroup $gap={16}>
          <RoundButton type="button" aria-label="Notifications"><BellIcon /></RoundButton>
          <RoundButton type="button" aria-label="Assistant"><ChatIcon /></RoundButton>
          <RoundButton type="button" aria-label="What's new"><RocketIcon /></RoundButton>
          <RoundButton type="button" aria-label="Notes"><NotesIcon /></RoundButton>
          <Divider />
          <RoundButton type="button" $solid>JC</RoundButton>
          <button type="button" aria-label="Account menu">
            <ChevronIcon size={16} ink={color.primary} weight={3} />
          </button>
        </BarGroup>
      </TopBar>

      <Heading>
        <BarGroup $gap={32}>
          <BackButton type="button" aria-label="Back"><ArrowLeftIcon /></BackButton>
          <PersonName>Jonas Campos</PersonName>
        </BarGroup>
        <BarGroup $gap={26}>
          <RedArrow />
          <SaveButton type="submit" form="person"><SaveIcon />Save</SaveButton>
        </BarGroup>
      </Heading>

      <Columns>
        <Side>
          <ProfileCard>
            <Photo>
              <RoundButton type="button" $solid aria-label="Change photo"><CameraIcon /></RoundButton>
            </Photo>
            <SwitchRow>
              Enabled
              <Switch type="checkbox" role="switch" defaultChecked />
            </SwitchRow>
          </ProfileCard>

          <InfoCard>
            <InfoIcon />
            <InfoText>
              <InfoTitle>Information</InfoTitle>
              <InfoMessage>You have pending changes to save!</InfoMessage>
            </InfoText>
          </InfoCard>

          <MenuCard as="nav">
            {MENU.map(([name, Icon], i) => (
              <MenuLink key={name} href="#section" $active={i === 0}>
                <Icon />
                {name}
              </MenuLink>
            ))}
          </MenuCard>
        </Side>

        <FormCard>
          <Form id="person">
            <FieldGrid>
              <Field id="names" label="Names" value="Jonas Campos" floatingLabel />
              <Field id="lastName" label="Last Name" />
              <Field id="code" label="Code" value="PV-AN-001" floatingLabel />
              <Field id="email" label="Email" floatingLabel />
              <SelectField id="group1" label="Group 1" options={["Analista"]} clearable />
              <SelectField id="group2" label="Group 2" options={[""]} />
            </FieldGrid>
            <AddressRow>
              <AddressFields>
                {ADDRESS.map(([id, label]) => <Field key={id} id={id} label={label} />)}
              </AddressFields>
              <LocationMap />
            </AddressRow>
            <FieldGrid>
              <Field id="latitude" label="Latitude" floatingLabel />
              <Field id="longitude" label="Longitude" floatingLabel />
            </FieldGrid>
          </Form>
        </FormCard>
      </Columns>
    </Page>
  );
}
